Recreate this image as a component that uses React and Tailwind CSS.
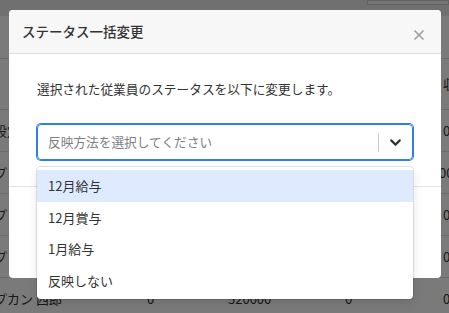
import { X, ChevronDown } from 'lucide-react';

const rows = [
    { name: '設定', a: '', b: '', c: '', d: '0' },
    { name: 'プ', a: '', b: '', c: '', d: '00' },
    { name: 'プ', a: '', b: '', c: '', d: '0' },
    { name: 'プ', a: '', b: '', c: '', d: '0' },
    { name: 'プカン 西郎', a: '0', b: '520000', c: '0', d: '0' },
];

const options = ['12月給与', '12月賞与', '1月給与', '反映しない'];

const App = () => {
    return (
        <div className="relative w-[449px] h-[313px] overflow-hidden bg-white text-[#333] font-['Noto_Sans_CJK_JP','Noto_Sans',sans-serif]">
            {/* Page behind the modal */}
            <div className="h-[16px] bg-[#eaeaea] flex justify-end">
                <div className="w-[82px] h-[5px] border border-[#ccc] bg-[#f4f4f4]"></div>
            </div>
            <div className="h-[43px] border-b border-[#ddd]"></div>
            <div className="h-[51px] border-b border-[#ddd] flex items-center text-[13px]">
                <span className="ml-[443px] whitespace-nowrap">収</span>
            </div>
            {rows.map((row, i) => (
                <div key={i} className="h-[42px] border-b border-[#ddd] flex items-center text-[13px] whitespace-nowrap">
                    <span className="w-[153px] shrink-0 ml-[-6px]">{row.name}</span>
                    <span className="w-[81px] shrink-0">{row.a}</span>
                    <span className="w-[117px] shrink-0">{row.b}</span>
                    <span className="w-[98px] shrink-0">{row.c}</span>
                    <span className={`shrink-0 ${row.d.length > 1 ? 'ml-[-4px]' : ''}`}>{row.d}</span>
                </div>
            ))}

            {/* Backdrop */}
            <div className="absolute inset-0 bg-black/[0.52]"></div>

            {/* Modal */}
            <div className="absolute left-[9px] top-[10px] w-[432px] h-[268px] bg-white rounded-[4px] flex flex-col">
                <div className="h-[44px] shrink-0 bg-[#f7f7f7] border-b border-[#dedede] rounded-t-[4px] flex items-center justify-between pl-[13px] pr-[14px]">
                    <h2 className="text-[13.5px] font-medium text-[#333]">ステータス一括変更</h2>
                    <X size={16} strokeWidth={2.6} className="text-[#a0a0a0] mt-[6px]" />
                </div>

                <div className="h-[133px] shrink-0 border-b border-[#e3e3e3] px-[28px] pt-[25px]">
                    <p className="text-[12.7px] leading-[20px] text-[#333]">選択された従業員のステータスを以下に変更します。</p>

                    <div className="relative mt-[25px]">
                        <div className="h-[36px] border-[1.5px] border-[#2f7fe6] rounded-[4px] shadow-[0_0_0_1px_#2f7fe6] flex items-center">
                            <span className="flex-1 pl-[10px] text-[12.7px] text-[#808080]">反映方法を選択してください</span>
                            <span className="w-px h-[19px] bg-[#ccc]"></span>
                            <span className="w-[33px] flex justify-center">
                                <ChevronDown size={17} strokeWidth={3} className="text-[#333]" />
                            </span>
                        </div>

                        {/* Dropdown menu */}
                        <div className="absolute left-0 right-0 top-[43px] z-10 bg-white rounded-[4px] py-[3px] shadow-[0_0_0_1px_rgba(0,0,0,0.1),0_4px_11px_rgba(0,0,0,0.1)]">
                            {options.map((opt, i) => (
                                <div
                                    key={opt}
                                    className={`h-[31.5px] flex items-center pl-[11px] text-[13px] text-[#333] ${i === 0 ? 'bg-[#deebff]' : ''}`}
                                >
                                    {opt}
                                </div>
                            ))}
                        </div>
                    </div>
                </div>

                <div className="flex-1"></div>
            </div>
        </div>
    );
};

export default App;
